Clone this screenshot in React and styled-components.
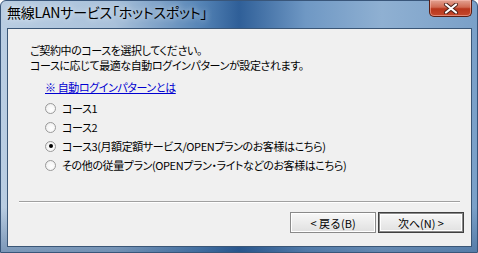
import styled, { createGlobalStyle } from "styled-components";

const GlobalStyle = createGlobalStyle`
  html, body {
    margin: 0;
    padding: 0;
    background: #fff;
  }
  body {
    font-family: "Noto Sans CJK JP", "Noto Sans", sans-serif;
    font-size: 12px;
    color: #000;
  }
`;

const options = [
  { label: "コース1", checked: false },
  { label: "コース2", checked: false },
  { label: "コース3(月額定額サービス/OPENプランのお客様はこちら)", checked: true },
  { label: "その他の従量プラン(OPENプラン・ライトなどのお客様はこちら)", checked: false },
];

function App() {
  return (
    <>
      <GlobalStyle />
      <Window>
        <TitleBar>
          <Title>無線LANサービス「ホットスポット」</Title>
          <CloseButton>
            <svg width="16" height="11" viewBox="0 0 16 11">
              <path d="M3 1.5 L13 9.5 M13 1.5 L3 9.5" stroke="#4a2018" strokeWidth="4" strokeLinecap="round" />
              <path d="M3 1.5 L13 9.5 M13 1.5 L3 9.5" stroke="#fff" strokeWidth="2.2" strokeLinecap="round" />
            </svg>
          </CloseButton>
        </TitleBar>
        <Frame>
          <Panel>
            <Intro>
              <Line>ご契約中のコースを選択してください。</Line>
              <Line>コースに応じて最適な自動ログインパターンが設定されます。</Line>
            </Intro>
            <HelpLink href="#">※ 自動ログインパターンとは</HelpLink>
            <Options>
              {options.map((o) => (
                <Option key={o.label}>
                  <Radio $checked={o.checked} />
                  <span>{o.label}</span>
                </Option>
              ))}
            </Options>
            <Spacer />
            <Separator />
            <Footer>
              <Button>&lt; 戻る(B)</Button>
              <Button $primary>次へ(N) &gt;</Button>
            </Footer>
          </Panel>
        </Frame>
      </Window>
    </>
  );
}

export default App;

const Window = styled.div`
  width: 478px;
  height: 253px;
  display: flex;
  flex-direction: column;
  box-sizing: border-box;
  background: linear-gradient(
    90deg,
    #b9cde2 0%,
    #a9c1da 24%,
    #5584b6 42%,
    #2f5f98 50%,
    #6f98c4 64%,
    #8fb0d2 80%,
    #7aa0c8 100%
  );
  border: 1px solid #39567a;
  border-radius: 6px 6px 0 0;
`;

const TitleBar = styled.div`
  height: 27px;
  display: flex;
  align-items: flex-start;
  justify-content: space-between;
  padding-left: 6px;
  padding-right: 5px;
`;

const Title = styled.div`
  padding-top: 3px;
  font-size: 14px;
  line-height: 16px;
  color: #000;
  font-feature-settings: "palt";
  letter-spacing: -0.2px;
  text-shadow: 0 0 6px rgba(255, 255, 255, 0.9);
`;

const CloseButton = styled.div`
  width: 43px;
  height: 17px;
  margin-top: -1px;
  box-sizing: border-box;
  display: flex;
  align-items: center;
  justify-content: center;
  border: 1px solid #5a1e14;
  border-top: none;
  border-radius: 0 0 5px 5px;
  background: linear-gradient(180deg, #e3a393 0%, #d06a52 45%, #b8361c 55%, #c4482c 100%);
  box-shadow: inset 0 0 0 1px rgba(255, 200, 190, 0.5);
`;

const Frame = styled.div`
  flex: 1;
  display: flex;
  padding: 0 5px 5px 6px;
  background: linear-gradient(180deg, transparent 0%, transparent 80%, rgba(30, 70, 120, 0.4) 100%);
`;

const Panel = styled.div`
  flex: 1;
  display: flex;
  flex-direction: column;
  background: #f0f0f0;
  border: 1px solid #3a5676;
  box-sizing: border-box;
  padding: 14px 0 0 22px;
  font-feature-settings: "palt";
  letter-spacing: -0.4px;
`;

const Intro = styled.div`
  display: flex;
  flex-direction: column;
`;

const Line = styled.div`
  font-size: 11px;
  line-height: 15px;
`;

const HelpLink = styled.a`
  margin: 7px 0 0 15px;
  font-size: 11px;
  line-height: 14px;
  color: #0000d0;
  text-decoration: underline;
  align-self: flex-start;
`;

const Options = styled.div`
  display: flex;
  flex-direction: column;
  gap: 5px;
  margin: 7px 0 0 15px;
`;

const Option = styled.div`
  display: flex;
  align-items: center;
  gap: 6px;
  height: 14px;
  font-size: 11px;
  line-height: 14px;
`;

const Radio = styled.span`
  width: 11px;
  height: 11px;
  box-sizing: border-box;
  border-radius: 50%;
  border: 1px solid #9a9a9a;
  background: radial-gradient(circle at 60% 60%, #ffffff 0%, #f4f4f4 60%, #d8d8d8 100%);
  display: flex;
  align-items: center;
  justify-content: center;
  &::after {
    content: "";
    width: 4px;
    height: 4px;
    border-radius: 50%;
    background: ${(p) => (p.$checked ? "#000" : "transparent")};
  }
`;

const Spacer = styled.div`
  flex: 1;
`;

const Separator = styled.div`
  height: 0;
  border-top: 1px solid #a0a0a0;
  border-bottom: 1px solid #ffffff;
  margin: 0 11px 0 -11px;
`;

const Footer = styled.div`
  display: flex;
  justify-content: flex-end;
  gap: 2px;
  padding: 9px 7px 13px 0;
`;

const Button = styled.div`
  width: 86px;
  height: 21px;
  box-sizing: border-box;
  display: flex;
  align-items: center;
  justify-content: center;
  white-space: pre;
  font-size: 11px;
  letter-spacing: 0;
  font-feature-settings: normal;
  color: #000;
  background: linear-gradient(180deg, #f8f8f8 0%, #ececec 50%, #e0e0e0 100%);
  border: 1px solid ${(p) => (p.$primary ? "#404040" : "#8a8a8a")};
  box-shadow: ${(p) =>
    p.$primary
      ? "inset 0 0 0 1px #8a8a8a, inset 0 0 0 2px #fff"
      : "inset 0 0 0 1px #fff"};
`;
